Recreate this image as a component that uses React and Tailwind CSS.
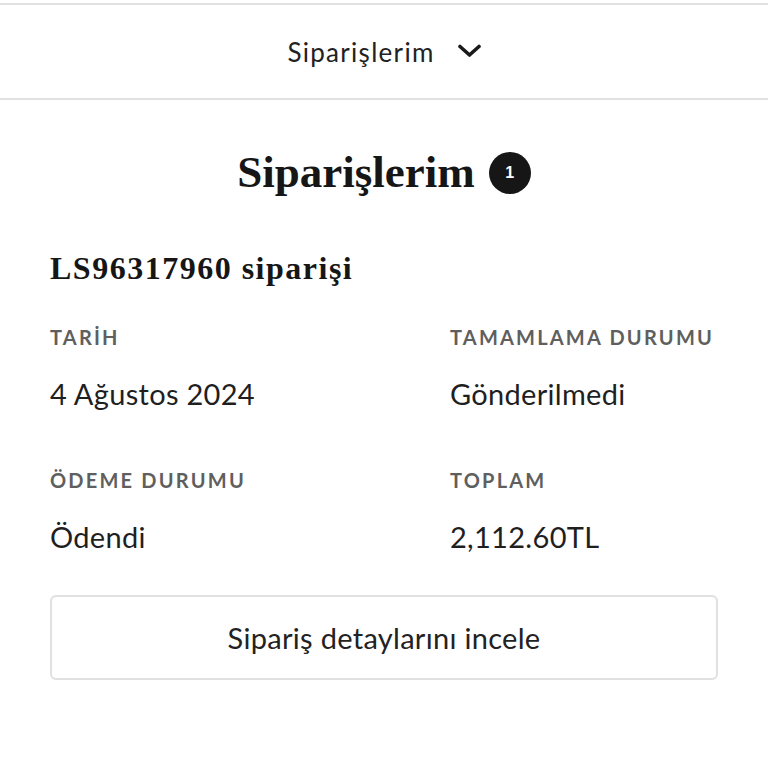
export default function App() {
  const sans = { fontFamily: "Lato, 'Noto Sans', sans-serif" };
  const serif = { fontFamily: "'Liberation Serif', 'Times New Roman', serif" };

  const fields = [
    { label: "TARİH", value: "4 Ağustos 2024" },
    { label: "TAMAMLAMA DURUMU", value: "Gönderilmedi" },
    { label: "ÖDEME DURUMU", value: "Ödendi" },
    { label: "TOPLAM", value: "2,112.60TL" },
  ];

  return (
    <div className="min-h-[768px] w-[768px] bg-white text-[#1f1f1f]" style={sans}>
      <div className="pt-[3px]">
        <div className="flex h-[97px] items-center justify-center gap-[23px] border-y-2 border-[#e1e1e1] pt-[2px]">
          <span className="text-[26px] tracking-[1.3px] text-[#222]">Siparişlerim</span>
          <svg width="23" height="14" viewBox="0 0 23 14" fill="none" className="-mt-[3px]">
            <path d="M2 2.5 L11.5 11 L21 2.5" stroke="#1a1a1a" strokeWidth="3.6" strokeLinecap="round" strokeLinejoin="round" />
          </svg>
        </div>
      </div>

      <div className="px-[50px]">
        <div className="mt-[50px] flex items-center justify-center gap-[14px]">
          <h1 className="text-[45px] font-bold leading-none text-[#161616]" style={serif}>
            Siparişlerim
          </h1>
          <span
            className="flex h-[42px] w-[42px] items-center justify-center rounded-full bg-[#161616] text-[16px] font-bold text-white"
            style={{ fontFamily: "'Liberation Sans', Arial, sans-serif" }}
          >
            1
          </span>
        </div>

        <h2 className="mt-[57px] text-[32px] font-bold leading-none tracking-[1.5px] text-[#161616]" style={serif}>
          LS96317960 siparişi
        </h2>

        <div className="mt-[43px] grid grid-cols-[400px_1fr] gap-y-[62px]">
          {fields.map((f) => (
            <div key={f.label}>
              <div className="text-[20px] font-bold leading-none tracking-[2.2px] text-[#5f5f5f]">{f.label}</div>
              <div className="mt-[32px] text-[29px] leading-none tracking-[0.3px]">{f.value}</div>
            </div>
          ))}
        </div>

        <button
          type="button"
          className="mt-[44px] flex h-[85px] w-full items-center justify-center rounded-[6px] border-2 border-[#e0e0e0] text-[29px] tracking-[0.3px] text-[#222]"
        >
          Sipariş detaylarını incele
        </button>
      </div>
    </div>
  );
}
